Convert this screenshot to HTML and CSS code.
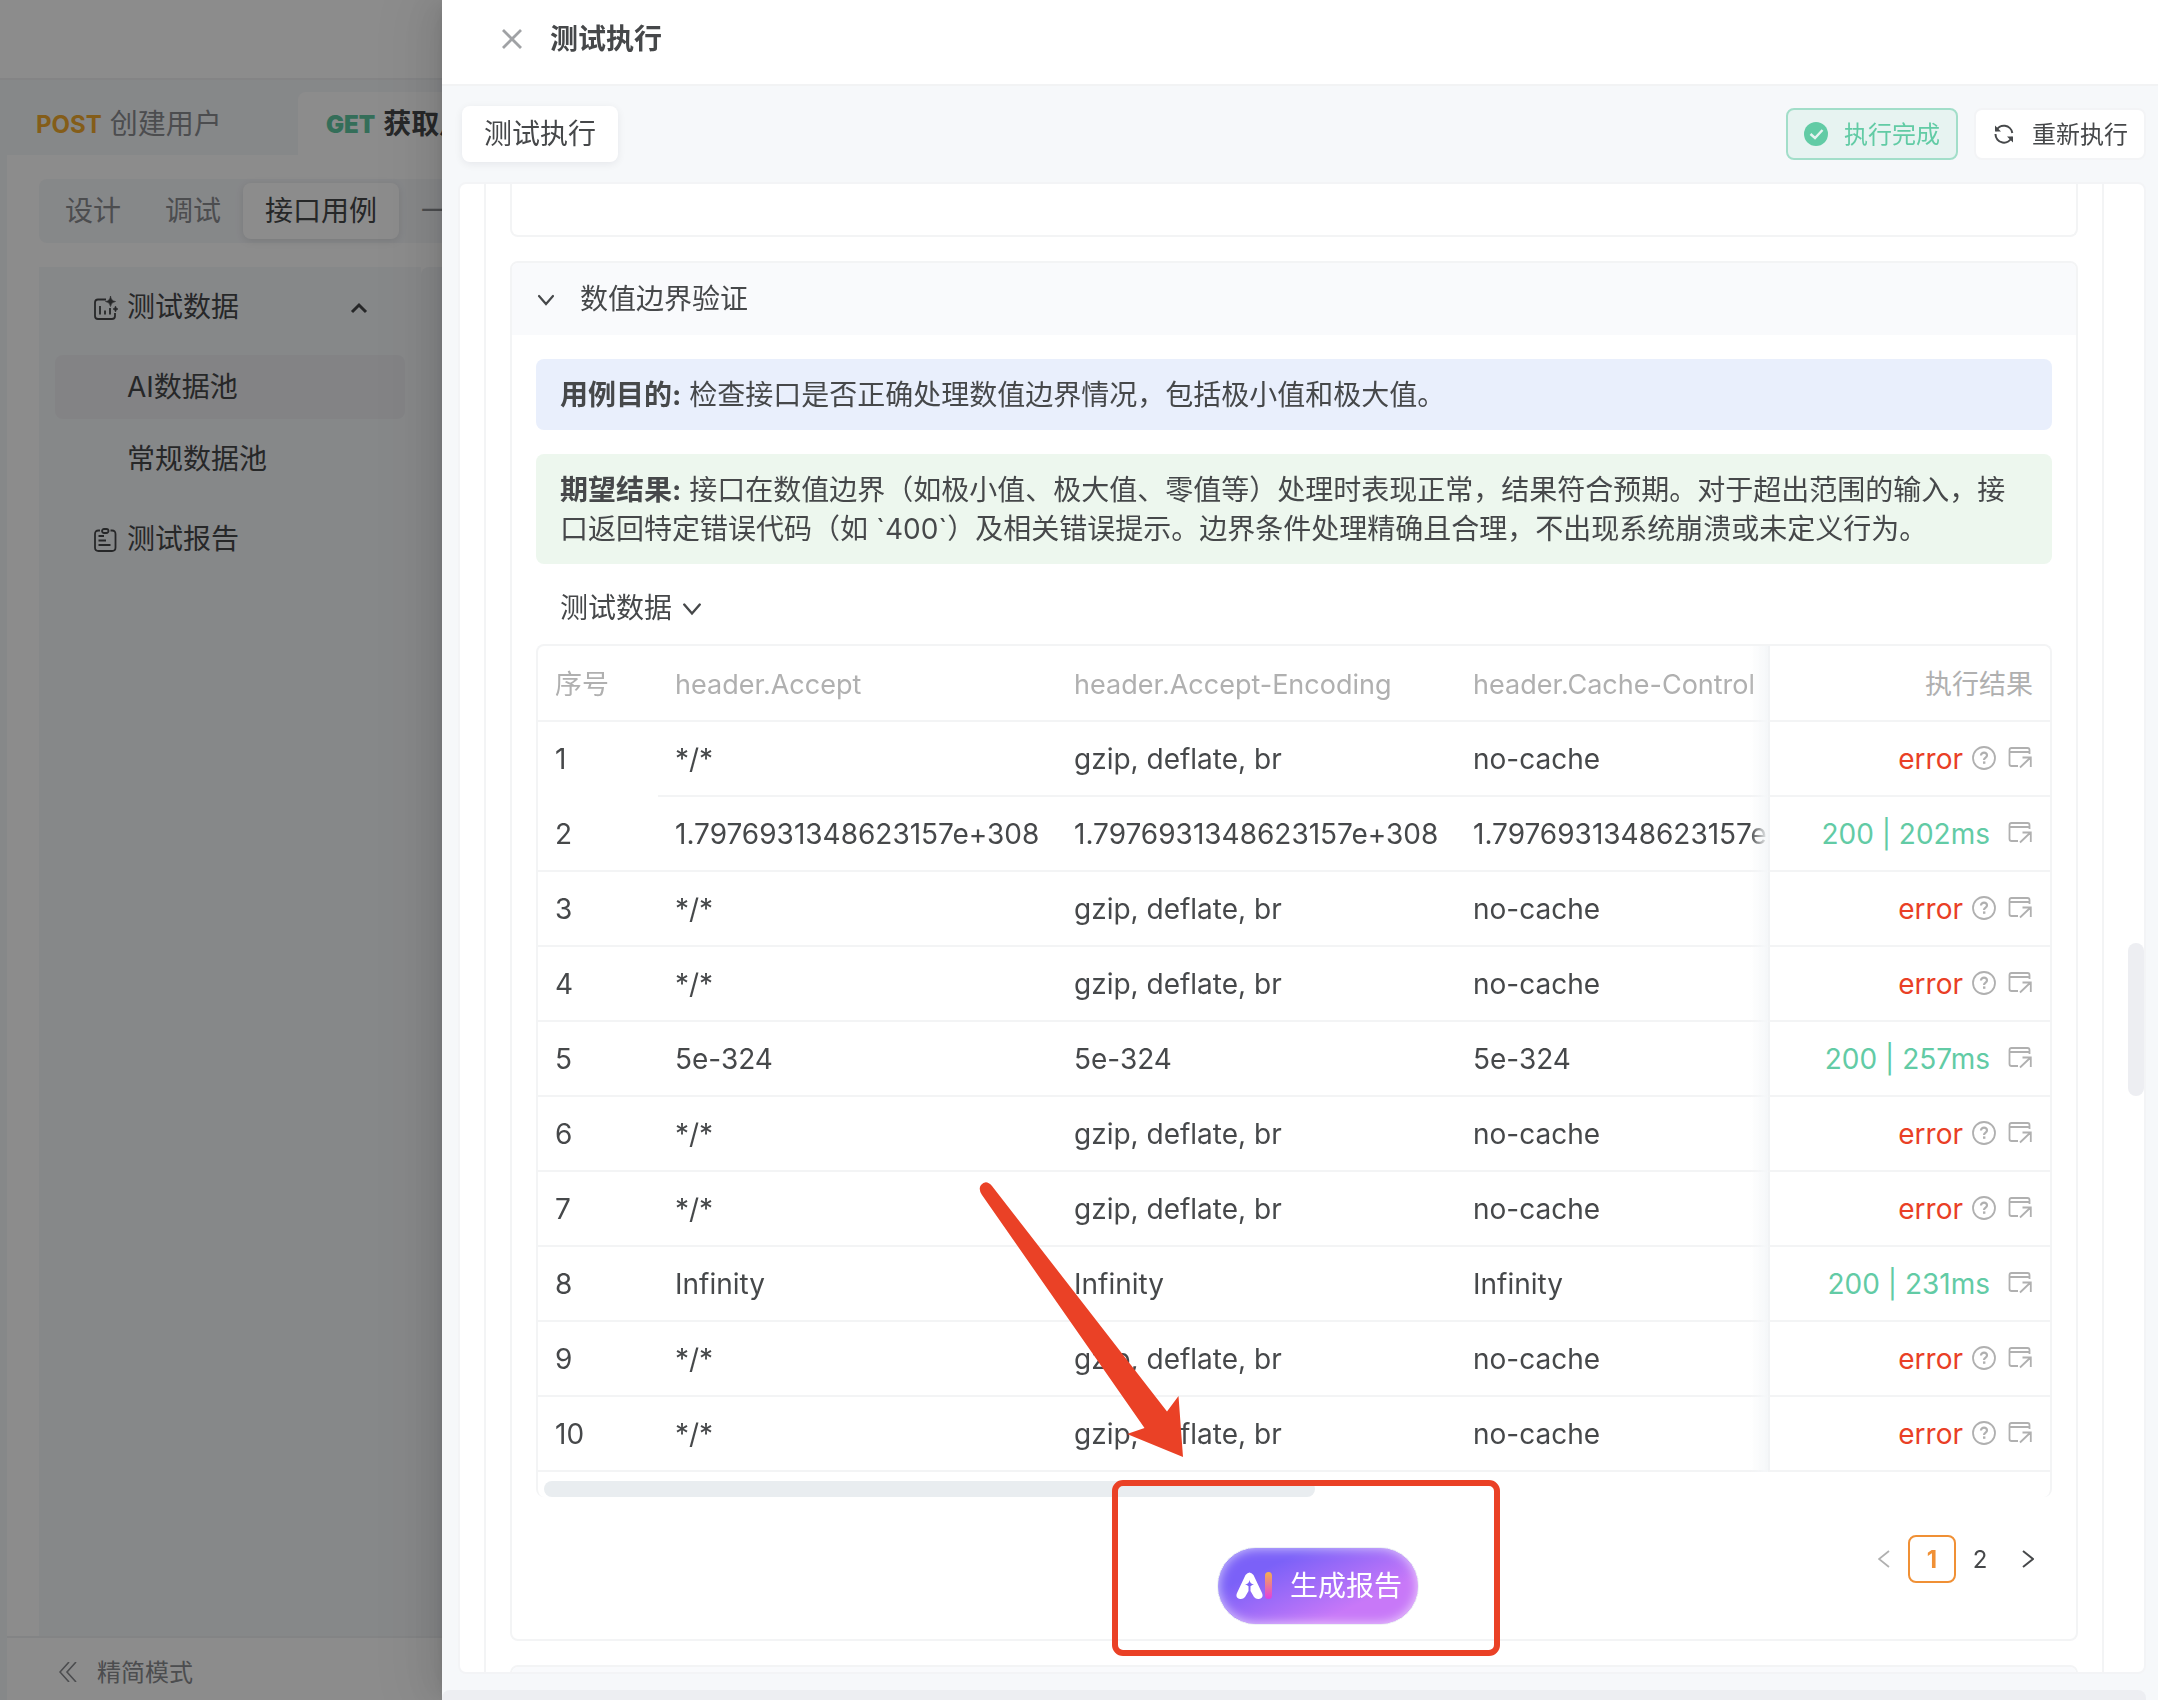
FILE: index.html
```html
<!DOCTYPE html>
<html lang="zh-CN">
<head>
    <meta charset="UTF-8">
    <meta name="viewport" content="width=device-width, initial-scale=1.0">
    <title>测试执行</title>
    <link rel="stylesheet" href="styles.css">
</head>
<body>
    <!-- 图标 -->
    <svg width="0" height="0" style="display:none">
        <symbol id="help" viewBox="0 0 24 24"><g fill="none" stroke="currentColor" stroke-width="1.8"><circle cx="12" cy="12" r="11"/><path d="M9 9.6c0-4 6.2-3.8 6 0 0 2-3 2-3 4.4" stroke-width="2.2"/></g><rect x="11" y="15.4" width="2.400" height="2.400" fill="currentColor"/></symbol>
        <symbol id="open" viewBox="0 0 24 24"><path d="M10 20H3.500Q1.500 20 1.500 18V4Q1.500 2 3.500 2H19.500Q21.500 2 21.500 4V8M1.500 6H21.500M12 21.500L22.500 11.500M14.500 11.500H22.800V21" fill="none" stroke="currentColor" stroke-width="1.8"/></symbol>
        <symbol id="down" viewBox="0 0 18 18"><path d="M2 5L9 13L16 5" fill="none" stroke="currentColor" stroke-width="2.2" stroke-linecap="round"/></symbol>
    </svg>

    <!-- 主页面 -->
    <div class="app">
        <header class="topbar"></header>
        <nav class="tabs">
            <a class="tab" href="#"><b class="post">POST</b>创建用户</a>
            <a class="tab active" href="#"><b class="get">GET</b>获取用户</a>
        </nav>
        <main class="page">
            <div class="segment">
                <button>设计</button>
                <button>调试</button>
                <button class="on">接口用例</button>
                <button>一键</button>
            </div>
            <div class="columns">
                <aside class="menu">
                    <a class="menu-item" href="#">
                        <svg width="24" height="24" viewBox="0 0 24 24" fill="none" stroke="currentColor" stroke-width="1.8"><path d="M12 3.500H4Q1 3.500 1 6.500V20Q1 23 4 23H18Q21 23 21 20V17M6 10V18.500M11 14.500V18.500M16 12V18.500"/><path d="M16.500 0Q17 5 21.500 5.500Q17 6 16.500 10.500Q16 6 11.500 5.500Q16 5 16.500 0ZM21.500 10Q21.800 12.700 24 13Q21.800 13.300 21.500 16Q21.200 13.300 19 13Q21.200 12.700 21.500 10Z" fill="currentColor" stroke="currentColor" stroke-width="0.600"/></svg>
                        测试数据
                        <svg class="arrow" width="18" height="18" viewBox="0 0 18 18"><path d="M2 13L9 6L16 13" fill="none" stroke="currentColor" stroke-width="3"/></svg>
                    </a>
                    <a class="menu-item sub selected" href="#">AI数据池</a>
                    <a class="menu-item sub" href="#">常规数据池</a>
                    <a class="menu-item report" href="#">
                        <svg width="24" height="24" viewBox="0 0 24 24" fill="none" stroke="currentColor" stroke-width="1.800"><path d="M6 2.500H4.500Q1 2.500 1 6V19.500Q1 23 4.500 23H18Q21.500 23 21.500 19.500V6Q21.500 2.500 18 2.500H16.500M4.500 8H10M4.500 12.500H12M4.500 17H16.500"/><rect x="8" y="1" width="6.500" height="4" rx="2"/></svg>
                        测试报告
                    </a>
                </aside>
                <div class="side-main"></div>
            </div>
        </main>
        <footer class="simple-mode">
            <svg width="18" height="20" viewBox="0 0 18 20"><path d="M10 0L1 10L10 20M17 0L8 10L17 20" fill="none" stroke="currentColor" stroke-width="1.600"/></svg>
            精简模式
        </footer>
    </div>

    <div class="mask"></div>

    <!-- 右侧抽屉 -->
    <section class="drawer">
        <header class="drawer-head">
            <button class="close" aria-label="关闭">
                <svg width="20" height="20" viewBox="0 0 20 20"><path d="M1 1L19 19M19 1L1 19" stroke="currentColor" stroke-width="2.800"/></svg>
            </button>
            <h1>测试执行</h1>
        </header>
        <div class="toolbar">
            <button class="run-tab">测试执行</button>
            <div class="actions">
                <button class="btn done">
                    <svg width="24" height="24" viewBox="0 0 24 24"><circle cx="12" cy="12" r="12" fill="#62cba5"/><path d="M6.500 12L11 16L18.500 8" fill="none" stroke="#e7f3f1" stroke-width="2.400"/></svg>
                    执行完成
                </button>
                <button class="btn">
                    <svg width="20" height="20" viewBox="0 0 20 20"><path d="M2 7A8.500 8.500 0 0 1 18.300 9M18 13A8.500 8.500 0 0 1 1.500 10" fill="none" stroke="currentColor" stroke-width="2"/><path d="M1 1.500V7.500H7M19 18.500V12.500H13Z" fill="currentColor"/></svg>
                    重新执行
                </button>
            </div>
        </div>

        <div class="drawer-body">
            <div class="case-list">
                <div class="card prev"></div>

                <div class="card">
                    <div class="card-head">
                        <svg width="18" height="18"><use href="#down"/></svg>
                        数值边界验证
                    </div>
                    <div class="card-body">
                        <p class="note blue"><b>用例目的:</b> 检查接口是否正确处理数值边界情况，包括极小值和极大值。</p>
                        <p class="note green"><b>期望结果:</b> 接口在数值边界（如极小值、极大值、零值等）处理时表现正常，结果符合预期。对于超出范围的输入，接口返回特定错误代码（如 `400`）及相关错误提示。边界条件处理精确且合理，不出现系统崩溃或未定义行为。</p>
                        <div class="data-title">测试数据 <svg width="20" height="20"><use href="#down"/></svg></div>

                        <div class="table-wrap">
                            <table>
                                <colgroup><col class="c-no"><col class="c-val"><col class="c-val"><col class="c-val"><col class="c-res"></colgroup>
                                <thead>
                                    <tr><th>序号</th><th>header.Accept</th><th>header.Accept-Encoding</th><th>header.Cache-Control</th><th class="fixed">执行结果</th></tr>
                                </thead>
                                <tbody id="rows"></tbody>
                            </table>
                            <div class="scroll-x"></div>
                        </div>

                        <nav class="pages">
                            <button class="off" aria-label="上一页"><svg width="12" height="18" viewBox="0 0 12 18"><path d="M11 1L1 9L11 17" fill="none" stroke="currentColor" stroke-width="1.800"/></svg></button>
                            <button class="current">1</button>
                            <button>2</button>
                            <button aria-label="下一页"><svg width="12" height="18" viewBox="0 0 12 18"><path d="M1 1L11 9L1 17" fill="none" stroke="currentColor" stroke-width="2"/></svg></button>
                        </nav>
                    </div>
                </div>

                <div class="card">
                    <div class="card-head"></div>
                </div>
            </div>
            <div class="scroll-y"></div>
        </div>
        <div class="bottom"><div class="bottom-bar"></div></div>

        <button class="ai-btn">
            <svg width="36" height="28" viewBox="0 0 36 28">
                <defs><linearGradient id="bar" x1="0" y1="0" x2="0" y2="1"><stop offset="0" stop-color="#f5b04c"/><stop offset="1" stop-color="#e03ee0"/></linearGradient></defs>
                <path d="M9.500 3Q13.500 -2 17.500 3L26 21Q28 26 23 27Q20 27.500 18 25L14.500 19V15H12.500V19L9 25Q7 27.500 4 27Q-1 26 1 21Z" fill="#fff"/>
                <path d="M13.500 8Q14 12 18 12.500Q14 13 13.500 17Q13 13 9 12.500Q13 12 13.500 8Z" fill="#7d63f7"/>
                <rect x="29" y="0" width="7" height="27" rx="3.500" fill="url(#bar)"/>
            </svg>
            生成报告
        </button>
    </section>

    <!-- 标注 -->
    <div class="mark-box"></div>
    <svg class="mark-arrow" width="210" height="280" viewBox="0 0 210 280"><path d="M22 6Q16 -1 11 5Q8 9 12 15L174.500 248L157 254L213 277L208.500 216L197 231.500Z" fill="#ea4126"/></svg>

    <script>
        const rows = [
            ['*/*', 'gzip, deflate, br', 'no-cache', 'error'],
            ['1.7976931348623157e+308', '1.7976931348623157e+308', '1.7976931348623157e+308', '200 | 202ms'],
            ['*/*', 'gzip, deflate, br', 'no-cache', 'error'],
            ['*/*', 'gzip, deflate, br', 'no-cache', 'error'],
            ['5e-324', '5e-324', '5e-324', '200 | 257ms'],
            ['*/*', 'gzip, deflate, br', 'no-cache', 'error'],
            ['*/*', 'gzip, deflate, br', 'no-cache', 'error'],
            ['Infinity', 'Infinity', 'Infinity', '200 | 231ms'],
            ['*/*', 'gzip, deflate, br', 'no-cache', 'error'],
            ['*/*', 'gzip, deflate, br', 'no-cache', 'error']
        ];
        const help = '<svg width="24" height="24"><use href="#help"/></svg>';
        const open = '<svg class="open" width="24" height="24"><use href="#open"/></svg>';

        document.getElementById('rows').innerHTML = rows.map((r, i) => {
            const bad = r[3] === 'error';
            return `<tr>
                <td>${i + 1}</td><td>${r[0]}</td><td>${r[1]}</td><td>${r[2]}</td>
                <td class="fixed"><div class="result"><span class="${bad ? 'error' : 'ok'}">${r[3]}</span>${bad ? help : ''}${open}</div></td>
            </tr>`;
        }).join('');
    </script>
</body>
</html>
```

FILE: styles.css
```css
* {
    box-sizing: border-box;
}

body {
    margin: 0;
    font-family: Inter, "Noto Sans CJK SC", sans-serif;
    font-size: 28px;
    line-height: 39px;
    font-feature-settings: "calt" 0;
    color: #46484a;
    overflow: hidden;
}

button {
    font: inherit;
    color: inherit;
    border: none;
    background: none;
    padding: 0;
    white-space: nowrap;
}

a {
    color: inherit;
    text-decoration: none;
}

svg {
    flex-shrink: 0;
}

/* 主页面 */
.app {
    height: 100vh;
    display: flex;
    flex-direction: column;
    background: #f5f7fa;
}

.topbar {
    height: 80px;
    background: #fff;
    border-bottom: 2px solid #f0f1f3;
}

.tabs {
    display: flex;
    padding: 12px 0 0 8px;
}

.tab {
    display: flex;
    align-items: center;
    gap: 8px;
    width: 290px;
    height: 63px;
    padding: 2px 28px 0;
    color: #8a8c90;
    white-space: nowrap;
    border-radius: 8px 8px 0 0;
}

.tab b {
    font-size: 24px;
}

.tab.active {
    width: 180px;
    padding-right: 0;
    background: #fff;
    color: #46484a;
    font-weight: bold;
    overflow: hidden;
}

.post {
    color: #f0aa2e;
}

.get {
    color: #5fc9a2;
}

.page {
    flex: 1;
    margin-left: 7px;
    padding: 24px 0 0 32px;
    background: #fff;
    display: flex;
    flex-direction: column;
    gap: 24px;
}

.segment {
    display: flex;
    padding: 4px;
    background: #f5f7fa;
    border-radius: 8px;
    color: #8a8c90;
}

.segment button {
    height: 56px;
    padding: 1px 22px 0;
    border-radius: 8px;
}

.segment .on {
    background: #fff;
    color: #46484a;
    box-shadow: 0 2px 8px rgba(0, 0, 0, 0.1);
}

.columns {
    flex: 1;
    display: flex;
}

.menu {
    width: 382px;
    padding: 8px 16px;
    background: #f5f7fa;
}

.side-main {
    flex: 1;
    background: #f3f5f8;
    border-radius: 8px 0 0 0;
}

.menu-item {
    display: flex;
    align-items: center;
    gap: 9px;
    height: 64px;
    padding: 1px 37px 0 39px;
    border-radius: 8px;
    margin-bottom: 16px;
}

.menu-item .arrow {
    margin-left: auto;
}

.menu-item.sub {
    padding-left: 72px;
    margin-bottom: 8px;
}

.menu-item.selected {
    background: #eeeff2;
}

.menu-item.report {
    margin-top: 16px;
}

.simple-mode {
    display: flex;
    align-items: center;
    gap: 20px;
    height: 64px;
    margin-left: 7px;
    padding: 6px 0 0 52px;
    background: #fff;
    border-top: 2px solid #eef0f2;
    color: #8a8c90;
    font-size: 24px;
}

.mask {
    position: fixed;
    inset: 0;
    background: rgba(0, 0, 0, 0.45);
}

/* 抽屉 */
.drawer {
    position: fixed;
    top: 0;
    bottom: 0;
    left: 442px;
    right: 0;
    display: flex;
    flex-direction: column;
    background: #f6f8fa;
    box-shadow: -12px 0 32px rgba(0, 0, 0, 0.08), -6px 0 12px -8px rgba(0, 0, 0, 0.12), -18px 0 56px 16px rgba(0, 0, 0, 0.05);
}

.drawer-head {
    display: flex;
    align-items: center;
    gap: 28px;
    height: 86px;
    padding: 0 60px 6px;
    background: #fff;
    border-bottom: 2px solid #f2f3f4;
}

.drawer-head h1 {
    margin: 0;
    font-size: 28px;
}

.close {
    display: flex;
    color: #a0a2a5;
}

.toolbar {
    display: flex;
    justify-content: space-between;
    align-items: center;
    height: 96px;
    padding: 0 12px 0 20px;
}

.run-tab {
    height: 56px;
    padding: 1px 22px 0;
    background: #fff;
    border-radius: 8px;
    box-shadow: 0 2px 8px rgba(0, 20, 40, 0.07);
}

.actions {
    display: flex;
    gap: 16px;
}

.btn {
    display: flex;
    align-items: center;
    justify-content: space-between;
    width: 172px;
    height: 52px;
    padding: 0 16px 0 18px;
    background: #fff;
    border: 2px solid #f3f4f6;
    border-radius: 8px;
    font-size: 24px;
}

.btn.done {
    padding-left: 16px;
    background: #e7f3f1;
    border-color: #a2dec9;
    color: #62cba5;
}

.drawer-body {
    position: relative;
    flex: 1;
    min-height: 0;
    margin: 0 12px 0 16px;
    padding: 0 40px 0 24px;
    background: #fff;
    border: 2px solid #f3f4f6;
    border-radius: 8px;
    overflow: hidden;
}

.case-list {
    padding: 0 24px;
    border: solid #f3f4f5;
    border-width: 0 2px;
}

.card {
    margin-bottom: 24px;
    border: 2px solid #f3f4f5;
    border-radius: 8px;
    overflow: hidden;
}

.card.prev {
    height: 53px;
    border-top: none;
    border-radius: 0 0 8px 8px;
}

.card-head {
    display: flex;
    align-items: center;
    gap: 25px;
    height: 72px;
    padding: 1px 25px 0;
    background: #f9fafc;
}

.card-body {
    padding: 24px 24px 56px;
}

.note {
    margin: 0 0 24px;
    padding: 17px 24px 15px;
    border-radius: 8px;
}

.blue {
    background: #e9effc;
}

.green {
    background: #edf7ee;
    margin-bottom: 0;
}

.data-title {
    display: flex;
    align-items: center;
    gap: 10px;
    padding: 25px 24px 16px;
}

/* 表格 */
.table-wrap {
    border: solid #f3f4f5;
    border-width: 2px 2px 0;
    border-radius: 8px;
    overflow: hidden;
}

table {
    table-layout: fixed;
    width: 1599px;
    border-collapse: separate;
    border-spacing: 0;
}

.c-no {
    width: 120px;
}

.c-val {
    width: 399px;
}

.c-res {
    width: 282px;
}

th,
td {
    height: 75px;
    padding: 2px 17px 0;
    border-bottom: 2px solid #f3f4f5;
    text-align: left;
    white-space: nowrap;
    font-weight: normal;
}

th {
    height: 76px;
    color: #b0b0b0;
    font-size: 27px;
}

tbody tr:first-child td:first-child {
    border-bottom-color: transparent;
}

.fixed {
    position: sticky;
    right: 0;
    background: #fff;
    border-left: 2px solid #f1f3f5;
    text-align: right;
}

.fixed::before {
    content: "";
    position: absolute;
    top: 0;
    bottom: -2px;
    left: -20px;
    width: 18px;
    background: linear-gradient(to right, rgba(243, 245, 248, 0), #f5f7f9);
}

.result {
    display: flex;
    align-items: center;
    justify-content: flex-end;
    gap: 9px;
    padding-right: 1px;
    color: #b0b0b0;
}

.result svg {
    margin-bottom: 3px;
}

.result .open {
    margin-left: 3px;
}

.ok {
    margin-right: 6px;
    color: #62cba5;
}

.error {
    color: #e93f26;
}

.scroll-x {
    width: 51%;
    height: 16px;
    margin: 9px 0 0 6px;
    background: #e9edf0;
    border-radius: 8px;
}

.pages {
    display: flex;
    justify-content: flex-end;
    margin-top: 38px;
    font-size: 24px;
}

.pages button {
    display: flex;
    align-items: center;
    justify-content: center;
    width: 48px;
    height: 48px;
    border-radius: 8px;
}

.pages .off {
    color: #b0b0b0;
}

.pages .current {
    color: #f09035;
    border: 2px solid #f09035;
    font-weight: bold;
}

.scroll-y {
    position: absolute;
    right: 0;
    top: 51%;
    width: 16px;
    height: 153px;
    background: #edeef2;
    border-radius: 8px;
}

.bottom {
    padding: 16px 12px 0 0;
}

.bottom-bar {
    height: 10px;
    background: #edeef2;
    border-radius: 8px 8px 0 0;
}

.ai-btn {
    position: absolute;
    left: 775px;
    bottom: 75px;
    display: flex;
    align-items: center;
    gap: 18px;
    width: 202px;
    height: 78px;
    padding: 0 18px;
    color: #fff;
    border: 1px solid #eef2f5;
    border-radius: 40px;
    background: linear-gradient(155deg, #7b61f8 25%, #c878f8 72%);
    box-shadow: inset 0 0 12px rgba(255, 255, 255, 0.7);
}

/* 标注 */
.mark-box {
    position: absolute;
    left: 1112px;
    top: 1480px;
    width: 388px;
    height: 176px;
    border: 6px solid #ea4126;
    border-radius: 11px;
}

.mark-arrow {
    position: absolute;
    left: 970px;
    top: 1180px;
    overflow: visible;
}
```
